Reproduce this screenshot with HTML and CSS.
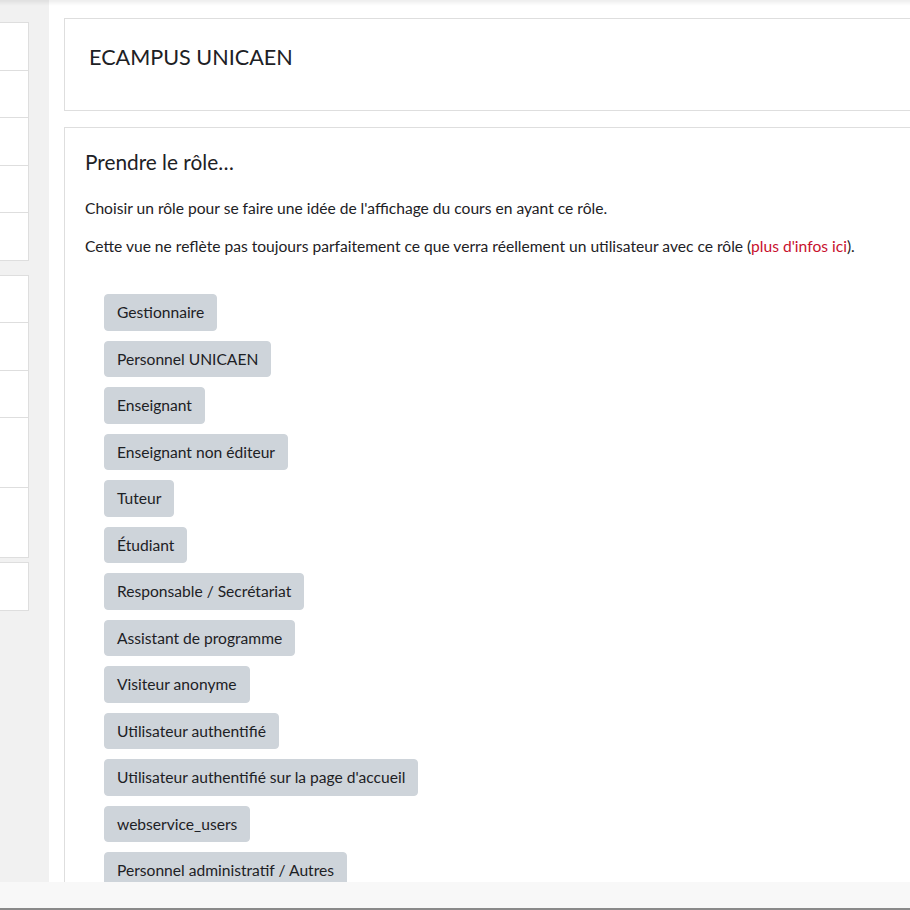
FILE: index.html
```html
<!DOCTYPE html>
<html lang="fr">
<head>
<meta charset="utf-8">
<title>Prendre le rôle</title>
<link rel="stylesheet" href="styles.css">
</head>
<body>
<div class="topshadow"></div>
<div class="page">
  <aside class="drawer">
    <ul class="navcard nav1">
      <li class="r47"></li>
      <li class="r46"></li>
      <li class="r47"></li>
      <li class="r46"></li>
      <li class="r47"></li>
    </ul>
    <ul class="navcard nav2">
      <li class="r46"></li>
      <li class="r47"></li>
      <li class="r46"></li>
      <li class="r69"></li>
      <li class="r69"></li>
    </ul>
    <ul class="navcard nav3">
      <li class="r47"></li>
    </ul>
  </aside>
  <main class="main">
    <header class="card header-card">
      <h1 class="site-title">ECAMPUS UNICAEN</h1>
    </header>
    <section class="card role-card">
      <h2 class="role-title">Prendre le rôle…</h2>
      <p class="lead">Choisir un rôle pour se faire une idée de l'affichage du cours en ayant ce rôle.</p>
      <p class="lead">Cette vue ne reflète pas toujours parfaitement ce que verra réellement un utilisateur avec ce rôle (<a href="#" class="infolink">plus d'infos ici</a>).</p>
      <ul class="roles">
        <li><button class="btn">Gestionnaire</button></li>
        <li><button class="btn">Personnel UNICAEN</button></li>
        <li><button class="btn">Enseignant</button></li>
        <li><button class="btn">Enseignant non éditeur</button></li>
        <li><button class="btn">Tuteur</button></li>
        <li><button class="btn">Étudiant</button></li>
        <li><button class="btn">Responsable / Secrétariat</button></li>
        <li><button class="btn">Assistant de programme</button></li>
        <li><button class="btn">Visiteur anonyme</button></li>
        <li><button class="btn">Utilisateur authentifié</button></li>
        <li><button class="btn">Utilisateur authentifié sur la page d'accueil</button></li>
        <li><button class="btn">webservice_users</button></li>
        <li><button class="btn">Personnel administratif / Autres</button></li>
      </ul>
    </section>
  </main>
</div>
<div class="footerbar"></div>
</body>
</html>
```

FILE: styles.css
```css
html, body {
  margin: 0;
  padding: 0;
  overflow: hidden;
  height: 100%;
}
body {
  font-family: Lato, "Open Sans", sans-serif;
  font-size: 15.6px;
  line-height: 22.5px;
  color: #1d2125;
  background: #ffffff;
}
.topshadow {
  position: fixed;
  top: 0;
  left: 0;
  right: 0;
  height: 6px;
  background: linear-gradient(rgba(0,0,0,0.07), rgba(0,0,0,0));
  z-index: 5;
}
.page {
  display: flex;
  width: 1200px;
  min-height: 910px;
}
.drawer {
  flex: 0 0 49px;
  width: 49px;
  background: #f1f1f1;
  padding: 22px 20px 0 0;
  box-sizing: border-box;
}
.navcard {
  list-style: none;
  margin: 0;
  padding: 0;
  background: #ffffff;
  border: 1px solid #dedede;
  border-left: none;
}
.navcard li + li {
  border-top: 1px solid #dedede;
}
.nav2 { margin-top: 14px; }
.nav3 { margin-top: 4px; }
.r46 { height: 46px; }
.r47 { height: 47px; }
.r69 { height: 69px; }
.main {
  flex: 1;
  padding: 18px 0 0 15px;
  background: #ffffff;
}
.card {
  border: 1px solid #dedede;
  background: #ffffff;
}
.header-card {
  padding: 24px 24px 39px 24px;
}
.site-title {
  margin: 0;
  font-size: 21.6px;
  font-weight: 400;
  line-height: 28px;
}
.role-card {
  margin-top: 16px;
  padding: 21px 20px 20px 20px;
}
.role-title {
  margin: 0 0 23px 0;
  font-size: 20.8px;
  font-weight: 400;
  line-height: 25px;
}
.lead {
  margin: 0 0 15px 0;
}
.infolink {
  color: #c8102e;
  text-decoration: none;
}
.roles {
  list-style: none;
  margin: 0;
  padding: 22px 0 0 19px;
}
.roles li {
  margin-bottom: 10px;
}
.btn {
  font-family: inherit;
  font-size: 15.6px;
  line-height: 22.5px;
  color: #1d2125;
  background: #ced4da;
  border: 1px solid #ced4da;
  border-radius: 4px;
  padding: 6px 12px;
  margin: 0;
}
.footerbar {
  position: fixed;
  left: 0;
  right: 0;
  bottom: 0;
  height: 26px;
  background: #f8f8f8;
  border-bottom: 2px solid #8a8a8a;
  z-index: 5;
}
```
